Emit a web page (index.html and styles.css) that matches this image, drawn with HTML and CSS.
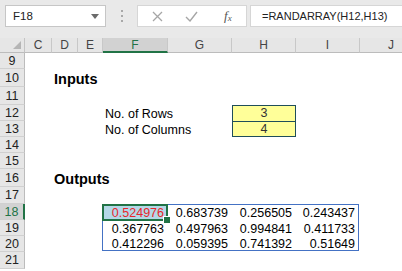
FILE: index.html
```html
<!DOCTYPE html>
<html lang="en">
<head>
    <meta charset="UTF-8">
    <title>RANDARRAY</title>
    <link rel="stylesheet" href="styles.css">
</head>
<body>
    <div class="toolbar">
        <div class="namebox">
            <span>F18</span>
            <svg width="8" height="5" viewBox="0 0 8 5"><path d="M0 0h8L4 5z" fill="#6b6b6b"/></svg>
        </div>
        <div class="grip"><i></i><i></i><i></i></div>
        <div class="fx-buttons">
            <svg class="btn-icon" width="11" height="11" viewBox="0 0 11 11">
                <path d="M1 1l9 9M10 1l-9 9" stroke="#a6a6a6" stroke-width="1.3" fill="none"/>
            </svg>
            <svg class="btn-icon" width="13" height="11" viewBox="0 0 13 11">
                <path d="M1 6l4 4 7-9" stroke="#a6a6a6" stroke-width="1.4" fill="none"/>
            </svg>
            <span class="fx">f<sub>x</sub></span>
        </div>
        <div class="formula">=RANDARRAY(H12,H13)</div>
    </div>

    <div class="sheet">
        <div class="corner">
            <svg width="8" height="8" viewBox="0 0 8 8"><path d="M8 0v8H0z" fill="#b5b5b5"/></svg>
        </div>
        <div class="ch">C</div>
        <div class="ch">D</div>
        <div class="ch">E</div>
        <div class="ch sel">F</div>
        <div class="ch">G</div>
        <div class="ch">H</div>
        <div class="ch">I</div>
        <div class="ch last">J</div>

        <div class="rh">9</div>
        <div class="rh">10</div>
        <div class="rh">11</div>
        <div class="rh">12</div>
        <div class="rh">13</div>
        <div class="rh">14</div>
        <div class="rh">15</div>
        <div class="rh">16</div>
        <div class="rh">17</div>
        <div class="rh sel">18</div>
        <div class="rh">19</div>
        <div class="rh">20</div>
        <div class="rh">21</div>

        <div class="title title-inputs">Inputs</div>
        <div class="label label-rows">No. of Rows</div>
        <div class="label label-cols">No. of Columns</div>
        <div class="inputs">
            <div>3</div>
            <div>4</div>
        </div>

        <div class="title title-outputs">Outputs</div>
        <div class="outputs">
            <div class="num active">0.524976</div>
            <div class="num">0.683739</div>
            <div class="num">0.256505</div>
            <div class="num">0.243437</div>
            <div class="num">0.367763</div>
            <div class="num">0.497963</div>
            <div class="num">0.994841</div>
            <div class="num">0.411733</div>
            <div class="num">0.412296</div>
            <div class="num">0.059395</div>
            <div class="num">0.741392</div>
            <div class="num">0.51649</div>
        </div>
    </div>
</body>
</html>
```

FILE: styles.css
```css
:root {
    --bar-bg: #e9e9e9;
    --head-bg: #e6e6e6;
    --head-sel: #d2d2d2;
    --excel-green: #217346;
    --range-blue: #4472c4;
    --input-border: #1f4e5a;
}

* {
    margin: 0;
    padding: 0;
    box-sizing: border-box;
}

body {
    font-family: 'Liberation Sans', Arial, sans-serif;
    background: #fff;
    width: 402px;
    height: 271px;
    overflow: hidden;
}

/* Formula bar */
.toolbar {
    height: 38px;
    background: var(--bar-bg);
    display: flex;
    align-items: flex-start;
    padding: 5px 0 0 5px;
}

.namebox {
    width: 101px;
    height: 22px;
    background: #fff;
    border: 1px solid #c6c6c6;
    display: flex;
    align-items: center;
    justify-content: space-between;
    padding: 0 6px 0 7px;
    font-size: 11.5px;
    color: #222;
}

.grip {
    width: 31px;
    height: 22px;
    display: flex;
    flex-direction: column;
    align-items: center;
    gap: 3px;
    padding-top: 5px;
}

.grip i {
    width: 2px;
    height: 2px;
    background: #a8a8a8;
}

.fx-buttons {
    width: 110px;
    height: 22px;
    background: #fff;
    border: 1px solid #d6d6d6;
    display: flex;
    align-items: center;
    padding-left: 14px;
    gap: 22px;
}

.fx {
    font-family: 'Liberation Serif', serif;
    font-style: italic;
    font-size: 13px;
    color: #555;
    margin-left: 4px;
}

.fx sub {
    font-size: 9px;
    vertical-align: -1px;
}

.formula {
    flex: 1;
    height: 22px;
    margin-left: 3px;
    background: #fff;
    border: 1px solid #d6d6d6;
    border-right: none;
    padding-left: 11px;
    font-size: 11px;
    line-height: 20px;
    color: #222;
}

/* Sheet */
.sheet {
    display: grid;
    grid-template-columns: 25px 27px 26px 25px 65px 64px 64px 64px 1fr;
    grid-template-rows: 15px 16px 18px 18px 16px 16px 16px 16px 18px 17px 16px 16px 16px 17px;
}

.corner {
    background: var(--head-bg);
    border-right: 1px solid #c4c4c4;
    border-bottom: 1px solid #bcbcbc;
    display: flex;
    align-items: flex-end;
    justify-content: flex-end;
    padding: 0 3px 3px 0;
}

.ch {
    background: var(--head-bg);
    border-right: 1px solid #c8c8c8;
    border-bottom: 1px solid #bcbcbc;
    text-align: center;
    font-size: 12px;
    line-height: 15px;
    color: #444;
}

.ch.last {
    text-align: left;
    padding-left: 28px;
    border-right: none;
}

.ch.sel {
    background: var(--head-sel);
    border-bottom: 2px solid var(--excel-green);
    color: var(--excel-green);
}

.rh {
    grid-column: 1;
    background: var(--head-bg);
    border-right: 1px solid #bcbcbc;
    border-bottom: 1px solid #d0d0d0;
    display: flex;
    align-items: center;
    justify-content: center;
    font-size: 12.5px;
    color: #222;
}

.rh.sel {
    background: var(--head-sel);
    border-right: 2px solid var(--excel-green);
    color: var(--excel-green);
}

.title {
    grid-column: 3 / 6;
    font-weight: bold;
    font-size: 14.5px;
    padding-left: 2px;
    align-self: end;
    white-space: nowrap;
}

.title-inputs { grid-row: 3; }
.title-outputs { grid-row: 9; }

.label {
    grid-column: 5 / 7;
    font-size: 12.5px;
    padding-left: 2px;
    align-self: end;
}

.label-rows { grid-row: 5; }
.label-cols { grid-row: 6; }

.inputs {
    grid-row: 5 / 7;
    grid-column: 7;
    display: grid;
    grid-template-rows: 1fr 1fr;
    background: #ffff99;
    border: 1px solid var(--input-border);
}

.inputs div {
    text-align: center;
    font-size: 12.5px;
    line-height: 14px;
    color: #333;
}

.inputs div + div {
    border-top: 1px solid var(--input-border);
}

.outputs {
    grid-row: 11 / 14;
    grid-column: 5 / 9;
    display: grid;
    grid-template-columns: 64px 64px 64px 1fr;
    grid-template-rows: 15px 16px 15px;
    border: 1px solid var(--range-blue);
    margin: 0 1px 1px -1px;
}

.num {
    display: flex;
    align-items: flex-end;
    justify-content: flex-end;
    padding-right: 3px;
    font-size: 12.5px;
    line-height: 14px;
    color: #000;
}

.num.active {
    position: relative;
    outline: 2px solid var(--excel-green);
    outline-offset: -1px;
    background: #b4d8e7;
    color: #e8262c;
}

.num.active::after {
    content: '';
    position: absolute;
    right: -4px;
    bottom: -4px;
    width: 6px;
    height: 6px;
    background: var(--excel-green);
    border: 1px solid #fff;
}
```
